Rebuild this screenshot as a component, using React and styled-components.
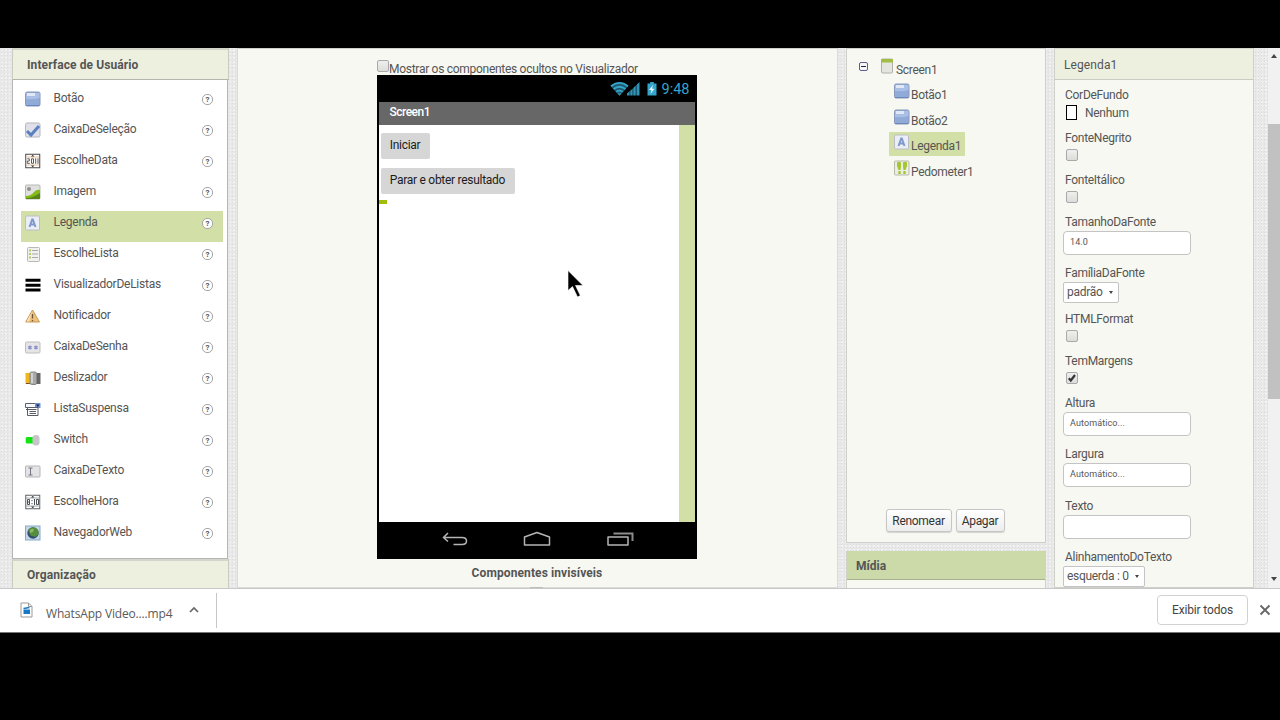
import React from "react";
import styled, { createGlobalStyle, css } from "styled-components";

const GlobalStyle = createGlobalStyle`
  * {
    box-sizing: border-box;
  }

  body {
    margin: 0;
    background: #000;
    color: #555;
    font-family: Roboto, "Liberation Sans", sans-serif;
    font-size: 12px;
    overflow: hidden;
  }
`;

const Page = styled.div`
  display: flex;
  flex-direction: column;
  width: 1280px;
  height: 720px;
  padding-top: 48px;
  background: #000;
`;

const Workspace = styled.div`
  display: flex;
  flex: none;
  height: 540px;
  padding-left: 12px;
  overflow: hidden;
  background-color: #e8e8e8;
  background-image: radial-gradient(#dcdcdc 0.7px, transparent 0.9px),
    radial-gradient(#f2f2f2 0.7px, transparent 0.9px);
  background-size: 3px 3px, 4px 4px;
`;

const Palette = styled.section`
  flex: none;
  width: 217px;
  margin-right: 8px;
`;

const PaletteHead = styled.h2`
  height: ${(p) => p.$height}px;
  margin: 0;
  padding-left: 14px;
  background: #edf0df;
  border: 1px solid #c9ccc0;
  border-top: 2px solid #d3d5ca;
  border-bottom-color: #b4b6ad;
  font-size: 12px;
  font-weight: 700;
  line-height: ${(p) => p.$height - 2}px;
  letter-spacing: 0.1px;
`;

const PaletteList = styled.div`
  height: 479px;
  margin: 0 1px 0 0;
  padding: 7px 4px 0 8px;
  background: #fff;
  border: 1px solid #b5b5b5;
  border-top: 0;
`;

const PaletteRow = styled.div`
  display: flex;
  align-items: flex-start;
  height: 31px;
  padding: 4px 10px 0 4px;
  background: ${(p) => (p.$active ? "#d2dfa6" : "transparent")};
`;

const RowLabel = styled.span`
  flex: 1;
  margin-left: 12.5px;
  line-height: 15px;
  letter-spacing: -0.25px;
`;

const Icon = styled.svg`
  display: block;
  flex: none;
  width: 16px;
  height: 16px;
`;

const Help = styled.span`
  width: 11px;
  height: 11px;
  margin-top: 3px;
  border: 1px solid #a5a5a5;
  border-radius: 5px;
  background: #fff;
  color: #555;
  font-size: 8px;
  font-weight: 700;
  line-height: 10px;
  text-align: center;
`;

const Viewer = styled.section`
  display: flex;
  flex-direction: column;
  align-items: center;
  flex: none;
  width: 601px;
  margin-right: 8px;
  padding-right: 2px;
  background: #f7f8f1;
  border: 1px solid #dcdcd6;
  border-top-color: #d0d0ca;
`;

const HiddenToggle = styled.label`
  display: flex;
  flex: none;
  align-items: flex-start;
  gap: 0.6px;
  width: 320px;
  height: 26px;
  padding-top: 11px;
  line-height: 19px;
  letter-spacing: -0.29px;
  white-space: nowrap;
`;

const CheckBox = styled.span`
  display: block;
  flex: none;
  width: 12px;
  height: 12px;
  border: 1px solid #a9a9a9;
  border-radius: 2px;
  background: linear-gradient(#efefed, #dcdddb);

  svg {
    display: block;
    width: 10px;
    height: 10px;
  }
`;

const Phone = styled.div`
  display: flex;
  flex: none;
  flex-direction: column;
  width: 320px;
  height: 484px;
  padding: 0 2px;
  background: #000;
`;

const StatusBar = styled.div`
  display: flex;
  align-items: center;
  justify-content: flex-end;
  height: 27px;
  padding-right: 5px;
  color: #35a5cb;
  font-size: 14.5px;

  svg {
    display: block;
    margin-right: -1px;
  }

  span {
    margin-left: 5px;
    padding-top: 2px;
    line-height: 27px;
  }
`;

const TitleBar = styled.div`
  height: 23px;
  padding-left: 11px;
  background: #676767;
  color: #fff;
  font-size: 12px;
  font-weight: 500;
  line-height: 21px;
  letter-spacing: -0.5px;
`;

const Screen = styled.div`
  display: flex;
  flex: 1;
  justify-content: space-between;
  background: #fff;
`;

const ScreenBody = styled.div`
  padding: 8px 0 0 2px;
`;

const PhoneButton = styled.div`
  width: ${(p) => p.$width}px;
  height: 26px;
  margin-bottom: 9px;
  border-radius: 2px;
  background: #d6d6d7;
  color: #1c1c1c;
  line-height: 25px;
  text-align: center;
  letter-spacing: -0.28px;
`;

const EmptyLabel = styled.div`
  width: 8px;
  height: 4px;
  margin: -3px 0 0 -2px;
  background: #a0bd0d;
`;

const ScreenEdge = styled.div`
  width: 16px;
  background: #d2dfa6;
`;

const NavBar = styled.div`
  display: flex;
  align-items: center;
  justify-content: space-between;
  height: 37px;
  padding: 0 61px 4px 62px;

  svg {
    display: block;
  }
`;

const InvisibleTitle = styled.div`
  flex: none;
  margin-top: 5px;
  padding-left: 1px;
  font-weight: 700;
  line-height: 18px;
  letter-spacing: 0.1px;
`;

const InvisibleHandle = styled.div`
  flex: none;
  width: 13px;
  height: 2px;
  margin-top: 5px;
  background: #bdbdb9;
`;

const TreeColumn = styled.div`
  flex: none;
  width: 200px;
  margin-right: 8px;
`;

const Tree = styled.section`
  display: flex;
  flex-direction: column;
  justify-content: space-between;
  height: 495px;
  padding: 7px 0 10px;
  background: #f7f8f1;
  border: 1px solid #cfcfca;
`;

const TreeRow = styled.div`
  display: flex;
  align-items: flex-start;
  width: fit-content;
  height: 24px;
  margin: 0 0 1.4px ${(p) => (p.$root ? 7 : 42)}px;
  padding: 2px 4px 0 5px;
  border-radius: 1px;
  background: ${(p) => (p.$active ? "#d2dfa6" : "transparent")};

  span {
    margin-left: 1px;
    line-height: 24px;
    letter-spacing: -0.3px;
  }
`;

const Collapse = styled.div`
  display: flex;
  align-items: center;
  justify-content: center;
  width: 9px;
  height: 9px;
  margin: 4px 11px 0 0;
  border: 1px solid #5c5c96;
  border-radius: 2px;

  &::after {
    content: "";
    width: 5px;
    height: 1px;
    background: #22226a;
  }
`;

const ButtonRow = styled.div`
  display: flex;
  justify-content: center;
  gap: 4px;
  padding-right: 2px;
`;

const TreeButton = styled.button`
  width: ${(p) => p.$width}px;
  height: 23px;
  padding: 0;
  border: 1px solid #c6c6c6;
  border-radius: 3px;
  background: linear-gradient(#fff, #ededed);
  box-shadow: 0 1px 1px rgba(0, 0, 0, 0.15);
  color: #333;
  font: 12px Roboto, sans-serif;
  letter-spacing: -0.3px;
`;

const Media = styled.section`
  height: 40px;
  margin-top: 8px;
  background: #f7f8f1;
  border: 1px solid #d0d2c8;
  border-top: 0;

  h2 {
    height: 29px;
    margin: 0;
    padding-left: 9px;
    background: #cbdaa8;
    border-bottom: 1px solid #a9b28f;
    font-size: 12px;
    line-height: 30px;
  }
`;

const Properties = styled.section`
  flex: none;
  width: 200px;
  background: #f7f8f1;
  border: 1px solid #cfcfca;
  border-top: 0;
`;

const PropertiesHead = styled.div`
  height: 32px;
  padding: 1px 0 0 9px;
  background: #edf0df;
  border-top: 1px solid #d3d5ca;
  border-bottom: 1px solid #c9ccc0;
  line-height: 30px;
  letter-spacing: 0.1px;
`;

const PropertiesBody = styled.div`
  padding: 8px 0 0 10px;
`;

const rowHeights = { color: 42.5, check: 42, text: 51.5, select: 45.5 };

const Property = styled.div`
  height: ${(p) => rowHeights[p.$kind]}px;
`;

const PropertyLabel = styled.div`
  height: 16px;
  line-height: 15px;
  letter-spacing: -0.28px;
`;

const ColorValue = styled.div`
  display: flex;
  align-items: center;
  height: 17px;
  letter-spacing: -0.28px;

  &::before {
    content: "";
    width: 11px;
    height: 15px;
    margin: 0 8px 0 1px;
    border: 1px solid #000;
    background: #fff;
    box-sizing: border-box;
  }
`;

const field = css`
  border: 1px solid #c4c4c4;
  background: #fff;
`;

const TextField = styled.div`
  ${field}
  width: 128px;
  height: 24px;
  margin-left: -2px;
  padding-left: 6px;
  border-radius: 4px;
  font-size: 9px;
  line-height: 21.5px;
  letter-spacing: 0.1px;
`;

const SelectField = styled.div`
  ${field}
  display: flex;
  align-items: center;
  justify-content: space-between;
  width: ${(p) => p.$width}px;
  height: 21px;
  margin-left: -2px;
  padding: 0 5px 1px 3px;
  border-radius: 2px;
  letter-spacing: -0.3px;

  &::after {
    content: "";
    border: 2.5px solid transparent;
    border-top: 3.5px solid #444;
    border-bottom: 0;
  }
`;

const PropertyCheck = styled(CheckBox)`
  margin: 2.5px 0 0 1px;
`;

const ScrollBar = styled.div`
  display: flex;
  flex-direction: column;
  align-items: center;
  justify-content: space-between;
  width: 12px;
  height: 540px;
  margin-left: 14px;
  padding: 6px 0 7px;
  background: #f1f1f1;
`;

const Arrow = styled.div`
  border: 3.5px solid transparent;
  ${(p) =>
    p.$up
      ? "border-bottom: 4px solid #444; border-top: 0;"
      : "border-top: 4px solid #444; border-bottom: 0;"}
`;

const Thumb = styled.div`
  width: 12px;
  height: 275px;
  margin-bottom: 113px;
  background: #c1c1c1;
`;

const DownloadBar = styled.footer`
  display: flex;
  flex: none;
  align-items: center;
  height: 45px;
  padding: 0 9px 1px 20px;
  background: #fff;
  border-top: 1px solid #c8c8c8;
  border-bottom: 1px solid #777;
  font-family: "Open Sans", sans-serif;
  font-size: 12px;
`;

const Download = styled.div`
  display: flex;
  align-items: center;
  width: 197px;
  height: 35px;
  border-right: 1px solid #c6c6c6;
  color: #5a5a5a;

  span {
    width: 143px;
    margin-left: 13px;
    padding-top: 6px;
    letter-spacing: -0.17px;
    white-space: nowrap;
  }
`;

const ShowAll = styled.button`
  width: 91px;
  height: 30px;
  margin: 0 11px 0 auto;
  padding: 0;
  border: 1px solid #d2d2d2;
  border-radius: 4px;
  background: #fff;
  color: #444;
  font: 12px Roboto, sans-serif;
  letter-spacing: -0.15px;
`;

const Pointer = styled.svg`
  position: absolute;
  top: 270px;
  left: 567px;
  width: 17px;
  height: 29px;
`;

const glyphs = {
  button: (
    <>
      <rect x="0.5" y="1" width="14.5" height="14" rx="1.5" fill="#91abd9" stroke="#8798b8" />
      <path d="M1 2h13.5v5Q8 9 1 8z" fill="#a9bfe5" />
      <path d="M2 2h8v3H2z" fill="#e0e8f8" />
      <path d="M1 14.5h13.5" stroke="#6d87bd" />
    </>
  ),
  check: (
    <>
      <rect x="0.5" y="1" width="14.5" height="14" rx="1.5" fill="#e0e0e8" stroke="#b6b6be" />
      <path d="M2 9l4 4 8-9" fill="none" stroke="#5b80c1" strokeWidth="3" />
    </>
  ),
  date: (
    <>
      <rect x="0.75" y="1.25" width="14" height="13.5" fill="#fff" stroke="#4b4545" />
      <path d="M2 4h12M2 12h12" stroke="#e5bd98" />
      <path d="M6 3.5l1.7-1.8 1.7 1.8zM6 12.5l1.7 1.8 1.7-1.8z" fill="#333" />
      <path d="M2.3 5.8h2v2.200h-2v2.300h2.500M6.500 5.800h2v4.500h-2zM10.700 5.300v5.500M13 5.300v5.500" fill="none" stroke="#65584e" />
    </>
  ),
  image: (
    <>
      <rect x="0.5" y="1" width="14.5" height="14" rx="1" fill="#e0e0df" stroke="#b7b7b5" />
      <circle cx="4" cy="5" r="2" fill="#8d918d" />
      <path d="M1 12q5 0 8-4 3-3 6-2v9H1z" fill="#83b91d" />
      <path d="M1 14q5 1 14-5v6H1z" fill="#568514" />
    </>
  ),
  label: (
    <>
      <rect x="0.5" y="1" width="14" height="14" rx="1" fill="#ebeef5" stroke="#bbbec7" />
      <path d="M4.5 12L7.2 4.5h.6l2.7 7.5M5.5 9.5h4" fill="none" stroke="#7f99cb" strokeWidth="2" />
    </>
  ),
  list: (
    <>
      <rect x="2.5" y="1.5" width="12" height="14" rx="1" fill="#f1f1ed" stroke="#b8b8b6" />
      <path d="M4 4.5h2M4 8h2M4 11.5h2" stroke="#b2cb65" strokeWidth="2" />
      <path d="M7 4.5h6M7 8h6M7 11.5h6" stroke="#aaa" />
    </>
  ),
  lines: <path d="M0.5 3.2h15M0.5 8.2h15M0.5 13h15" stroke="#000" strokeWidth="3" />,
  warning: (
    <>
      <path d="M7.5 2L14.5 14H0.7z" fill="#ecc07d" stroke="#c99852" />
      <path d="M7.5 3L4 13.5H1.5z" fill="#f8e3bd" />
      <path d="M7.5 6v4.5M7.5 12v1.2" stroke="#715636" strokeWidth="1.3" />
    </>
  ),
  password: (
    <>
      <rect x="0.5" y="3" width="14.5" height="11" rx="1.2" fill="#e5e5e7" stroke="#bdbdbf" />
      <path d="M5 6.5v4M3.2 7.5l3.600 2M6.800 7.500l-3.600 2M11 6.500v4M9.200 7.500l3.600 2M12.800 7.500l-3.600 2" stroke="#8c92ca" strokeWidth="1.2" />
    </>
  ),
  slider: (
    <>
      <path d="M0.5 3H5v11H0.5z" fill="#efb71d" />
      <path d="M1 13.5h4" stroke="#6c5520" />
      <path d="M11 3h4.5v11H11z" fill="#666" />
      <rect x="5" y="2" width="6.5" height="12.5" rx="1.5" fill="#aaa" stroke="#888" />
      <path d="M7 3v10" stroke="#d1d1d1" strokeWidth="2" />
    </>
  ),
  spinner: (
    <>
      <path d="M0.5 2.5h14v4H0.5z" fill="#f6f7fa" stroke="#596173" />
      <path d="M10 2h5.5v5H10z" fill="#6e91d0" />
      <path d="M11 3.5h3.5l-1.7 2.4z" fill="#14234f" />
      <path d="M2.5 6.5h10.5v8H2.5z" fill="#fff" stroke="#565c66" />
      <path d="M1 8.5h10.5M4.5 10.5h6.5M4.5 12.5h6.5" stroke="#565c66" />
    </>
  ),
  toggle: (
    <>
      <rect x="0.7" y="5" width="13" height="6.5" rx="1.5" fill="#12e512" />
      <rect x="7.5" y="3" width="7" height="10.5" rx="3.3" fill="#c7c5ca" />
    </>
  ),
  textbox: (
    <>
      <rect x="0.5" y="3" width="14.5" height="11" rx="0.8" fill="#e4e4e6" stroke="#b5b5b9" />
      <path d="M3.5 5h4M5.5 5v7M3.5 12h4" fill="none" stroke="#777481" />
    </>
  ),
  time: (
    <>
      <rect x="0.75" y="1.25" width="14" height="13.5" fill="#fff" stroke="#5b6067" />
      <path d="M1 4h14M1 12h14M7.7 1v2.5M7.7 12.5v2" stroke="#a2a8ad" />
      <path d="M6 3.5l1.7-1.8 1.7 1.8zM6 12.5l1.7 1.8 1.7-1.8z" fill="#3b4046" />
      <path d="M2.5 5.5h2v5h-2zM2.5 8h2M9.5 5v6M11.5 5.5h2v5h-2zM7 6v1.2M7 9v1.2" fill="none" stroke="#4c5258" />
    </>
  ),
  globe: (
    <>
      <rect x="0.5" y="1" width="14.5" height="14" fill="#c5d8e9" stroke="#87a9c6" />
      <circle cx="8" cy="8" r="5.7" fill="#344f73" />
      <path d="M3 5q3-4 8-2 3 2 2.5 6l-3 3-5-1.5z" fill="#548e3b" />
      <path d="M5 5q2-2 4-1l-1 3-3 1z" fill="#91b466" />
    </>
  ),
  screen: (
    <>
      <rect x="2.5" y="1" width="11" height="14" rx="1" fill="#e4e5df" stroke="#b0b2a8" />
      <path d="M2 1h12v3.5H2z" fill="#a2bd46" />
    </>
  ),
  steps: (
    <>
      <rect x="0.5" y="1" width="14.5" height="14" rx="1" fill="#ebeee2" stroke="#b7bba9" />
      <path d="M3 2.5q2-1.5 4 0V7L6.5 10h-2L3 6zM9 2.5q2-1.5 4 0V6l-1.5 4h-2L9 7z" fill="#a3c631" />
      <rect x="4.2" y="11" width="2.6" height="3" rx="1" fill="#a3c631" />
      <rect x="9.2" y="11" width="2.6" height="3" rx="1" fill="#a3c631" />
    </>
  ),
};

const Glyph = ({ name }) => <Icon viewBox="0 0 16 16">{glyphs[name]}</Icon>;

const paletteItems = [
  ["Botão", "button"],
  ["CaixaDeSeleção", "check"],
  ["EscolheData", "date"],
  ["Imagem", "image"],
  ["Legenda", "label"],
  ["EscolheLista", "list"],
  ["VisualizadorDeListas", "lines"],
  ["Notificador", "warning"],
  ["CaixaDeSenha", "password"],
  ["Deslizador", "slider"],
  ["ListaSuspensa", "spinner"],
  ["Switch", "toggle"],
  ["CaixaDeTexto", "textbox"],
  ["EscolheHora", "time"],
  ["NavegadorWeb", "globe"],
];

const treeItems = [
  ["Botão1", "button"],
  ["Botão2", "button"],
  ["Legenda1", "label"],
  ["Pedometer1", "steps"],
];

const properties = [
  { label: "CorDeFundo", kind: "color", value: "Nenhum" },
  { label: "FonteNegrito", kind: "check" },
  { label: "FonteItálico", kind: "check" },
  { label: "TamanhoDaFonte", kind: "text", value: "14.0" },
  { label: "FamíliaDaFonte", kind: "select", value: "padrão", width: 56 },
  { label: "HTMLFormat", kind: "check" },
  { label: "TemMargens", kind: "check", value: true },
  { label: "Altura", kind: "text", value: "Automático..." },
  { label: "Largura", kind: "text", value: "Automático..." },
  { label: "Texto", kind: "text", value: "" },
  { label: "AlinhamentoDoTexto", kind: "select", value: "esquerda : 0", width: 82 },
];

const PropertyValue = ({ kind, value, width }) => {
  if (kind === "color") return <ColorValue>{value}</ColorValue>;
  if (kind === "text") return <TextField>{value}</TextField>;
  if (kind === "select") return <SelectField $width={width}>{value}</SelectField>;
  return (
    <PropertyCheck>
      {value && (
        <svg viewBox="0 0 10 10">
          <path d="M1.8 5.3l2 2.2 4.2-5.5" fill="none" stroke="#333" strokeWidth="2.2" />
        </svg>
      )}
    </PropertyCheck>
  );
};

const PalettePanel = () => (
  <Palette>
    <PaletteHead $height={32}>Interface de Usuário</PaletteHead>
    <PaletteList>
      {paletteItems.map(([name, icon]) => (
        <PaletteRow key={name} $active={name === "Legenda"}>
          <Glyph name={icon} />
          <RowLabel>{name}</RowLabel>
          <Help>?</Help>
        </PaletteRow>
      ))}
    </PaletteList>
    <PaletteHead $height={31}>Organização</PaletteHead>
  </Palette>
);

const ViewerPanel = () => (
  <Viewer>
    <HiddenToggle>
      <CheckBox />
      Mostrar os componentes ocultos no Visualizador
    </HiddenToggle>
    <Phone>
      <StatusBar>
        <svg width="48" height="16" viewBox="0 0 48 16">
          <path d="M0.5 5Q9.5-2.5 18.5 5l-9 10z" fill="#1d5a70" />
          <g fill="none" stroke="#35a5cb" strokeWidth="1.8">
            <path d="M1 5.2q8.5-6.5 17 0M3.6 8q5.900-4.600 11.800 0M6.300 10.800q3.200-2.400 6.400 0" />
          </g>
          <path d="M7.5 12.2h4l-2 2.3z" fill="#2f93b5" />
          <path d="M17 14.5v-2l2.7-2.4v4.4zM20.2 14.5V9.7l2.5-2.3v7.1zM23.2 14.5V6.9l2.6-2.3v9.9zM26.4 14.5V4l3.1-3v13.5z" fill="#2f93b5" />
          <path d="M37.5 2.5h2.7V1h3.6v1.5h2.7v12h-9z" fill="#35a5cb" />
          <path d="M43 4l-4 5h2.5l-1 4 4-5.2H42z" fill="#e7f7fb" />
        </svg>
        <span>9:48</span>
      </StatusBar>
      <TitleBar>Screen1</TitleBar>
      <Screen>
        <ScreenBody>
          <PhoneButton $width={49}>Iniciar</PhoneButton>
          <PhoneButton $width={134}>Parar e obter resultado</PhoneButton>
          <EmptyLabel />
        </ScreenBody>
        <ScreenEdge />
      </Screen>
      <NavBar>
        <svg width="28" height="16" viewBox="0 0 28 16" fill="none" stroke="#b5b5b5" strokeWidth="1.5">
          <path d="M7 2L2.5 6.5 7 10.5M2.5 6.5H21q4.500 0 4.500 3.500T21 13.500h-8.500" />
        </svg>
        <svg width="28" height="16" viewBox="0 0 28 16" fill="none" stroke="#b5b5b5" strokeWidth="1.5">
          <path d="M1.5 6L14 1.5 26.5 6v8h-25z" strokeLinejoin="round" />
        </svg>
        <svg width="28" height="16" viewBox="0 0 28 16" fill="none" stroke="#b5b5b5" strokeWidth="1.5">
          <path d="M2 6h20v8H2z" strokeLinejoin="round" />
          <path d="M7.5 2.5h19V10" stroke="#8c8c8c" strokeWidth="2" />
        </svg>
      </NavBar>
    </Phone>
    <InvisibleTitle>Componentes invisíveis</InvisibleTitle>
    <InvisibleHandle />
  </Viewer>
);

const TreePanel = () => (
  <TreeColumn>
    <Tree>
      <div>
        <TreeRow $root>
          <Collapse />
          <Glyph name="screen" />
          <span>Screen1</span>
        </TreeRow>
        {treeItems.map(([name, icon]) => (
          <TreeRow key={name} $active={name === "Legenda1"}>
            <Glyph name={icon} />
            <span>{name}</span>
          </TreeRow>
        ))}
      </div>
      <ButtonRow>
        <TreeButton $width={66}>Renomear</TreeButton>
        <TreeButton $width={49}>Apagar</TreeButton>
      </ButtonRow>
    </Tree>
    <Media>
      <h2>Mídia</h2>
    </Media>
  </TreeColumn>
);

const PropertiesPanel = () => (
  <Properties>
    <PropertiesHead>Legenda1</PropertiesHead>
    <PropertiesBody>
      {properties.map((item) => (
        <Property key={item.label} $kind={item.kind}>
          <PropertyLabel>{item.label}</PropertyLabel>
          <PropertyValue {...item} />
        </Property>
      ))}
    </PropertiesBody>
  </Properties>
);

const App = () => {
  return (
    <>
      <GlobalStyle />
      <Page>
        <Workspace>
          <PalettePanel />
          <ViewerPanel />
          <TreePanel />
          <PropertiesPanel />
          <ScrollBar>
            <Arrow $up />
            <Thumb />
            <Arrow />
          </ScrollBar>
        </Workspace>
        <DownloadBar>
          <Download>
            <svg width="13" height="16" viewBox="0 0 13 16">
              <path d="M1 1h7.5L12 4.5V15H1z" fill="#fff" stroke="#999" />
              <path d="M8.5 1v3.5H12" fill="none" stroke="#999" />
              <path d="M3.5 7.5h6.5V12H3.5z" fill="#1679c7" />
              <path d="M3.5 6.5l6-1" stroke="#1679c7" strokeWidth="1.3" />
            </svg>
            <span>WhatsApp Video....mp4</span>
            <svg width="10" height="8" viewBox="0 0 10 8">
              <path d="M1 6l4-4 4 4" fill="none" stroke="#666" strokeWidth="1.7" />
            </svg>
          </Download>
          <ShowAll>Exibir todos</ShowAll>
          <svg width="12" height="12" viewBox="0 0 12 12">
            <path d="M1.5 1.5l9 9M10.5 1.5l-9 9" stroke="#666" strokeWidth="1.8" />
          </svg>
        </DownloadBar>
      </Page>
      <Pointer viewBox="0 0 17 29">
        <path d="M1 0.5v20l4.5-4 5 10.500 2.800-1.400L8.500 15.500H16z" fill="#000" stroke="#fff" strokeWidth="0.6" />
      </Pointer>
    </>
  );
};

export default App;
